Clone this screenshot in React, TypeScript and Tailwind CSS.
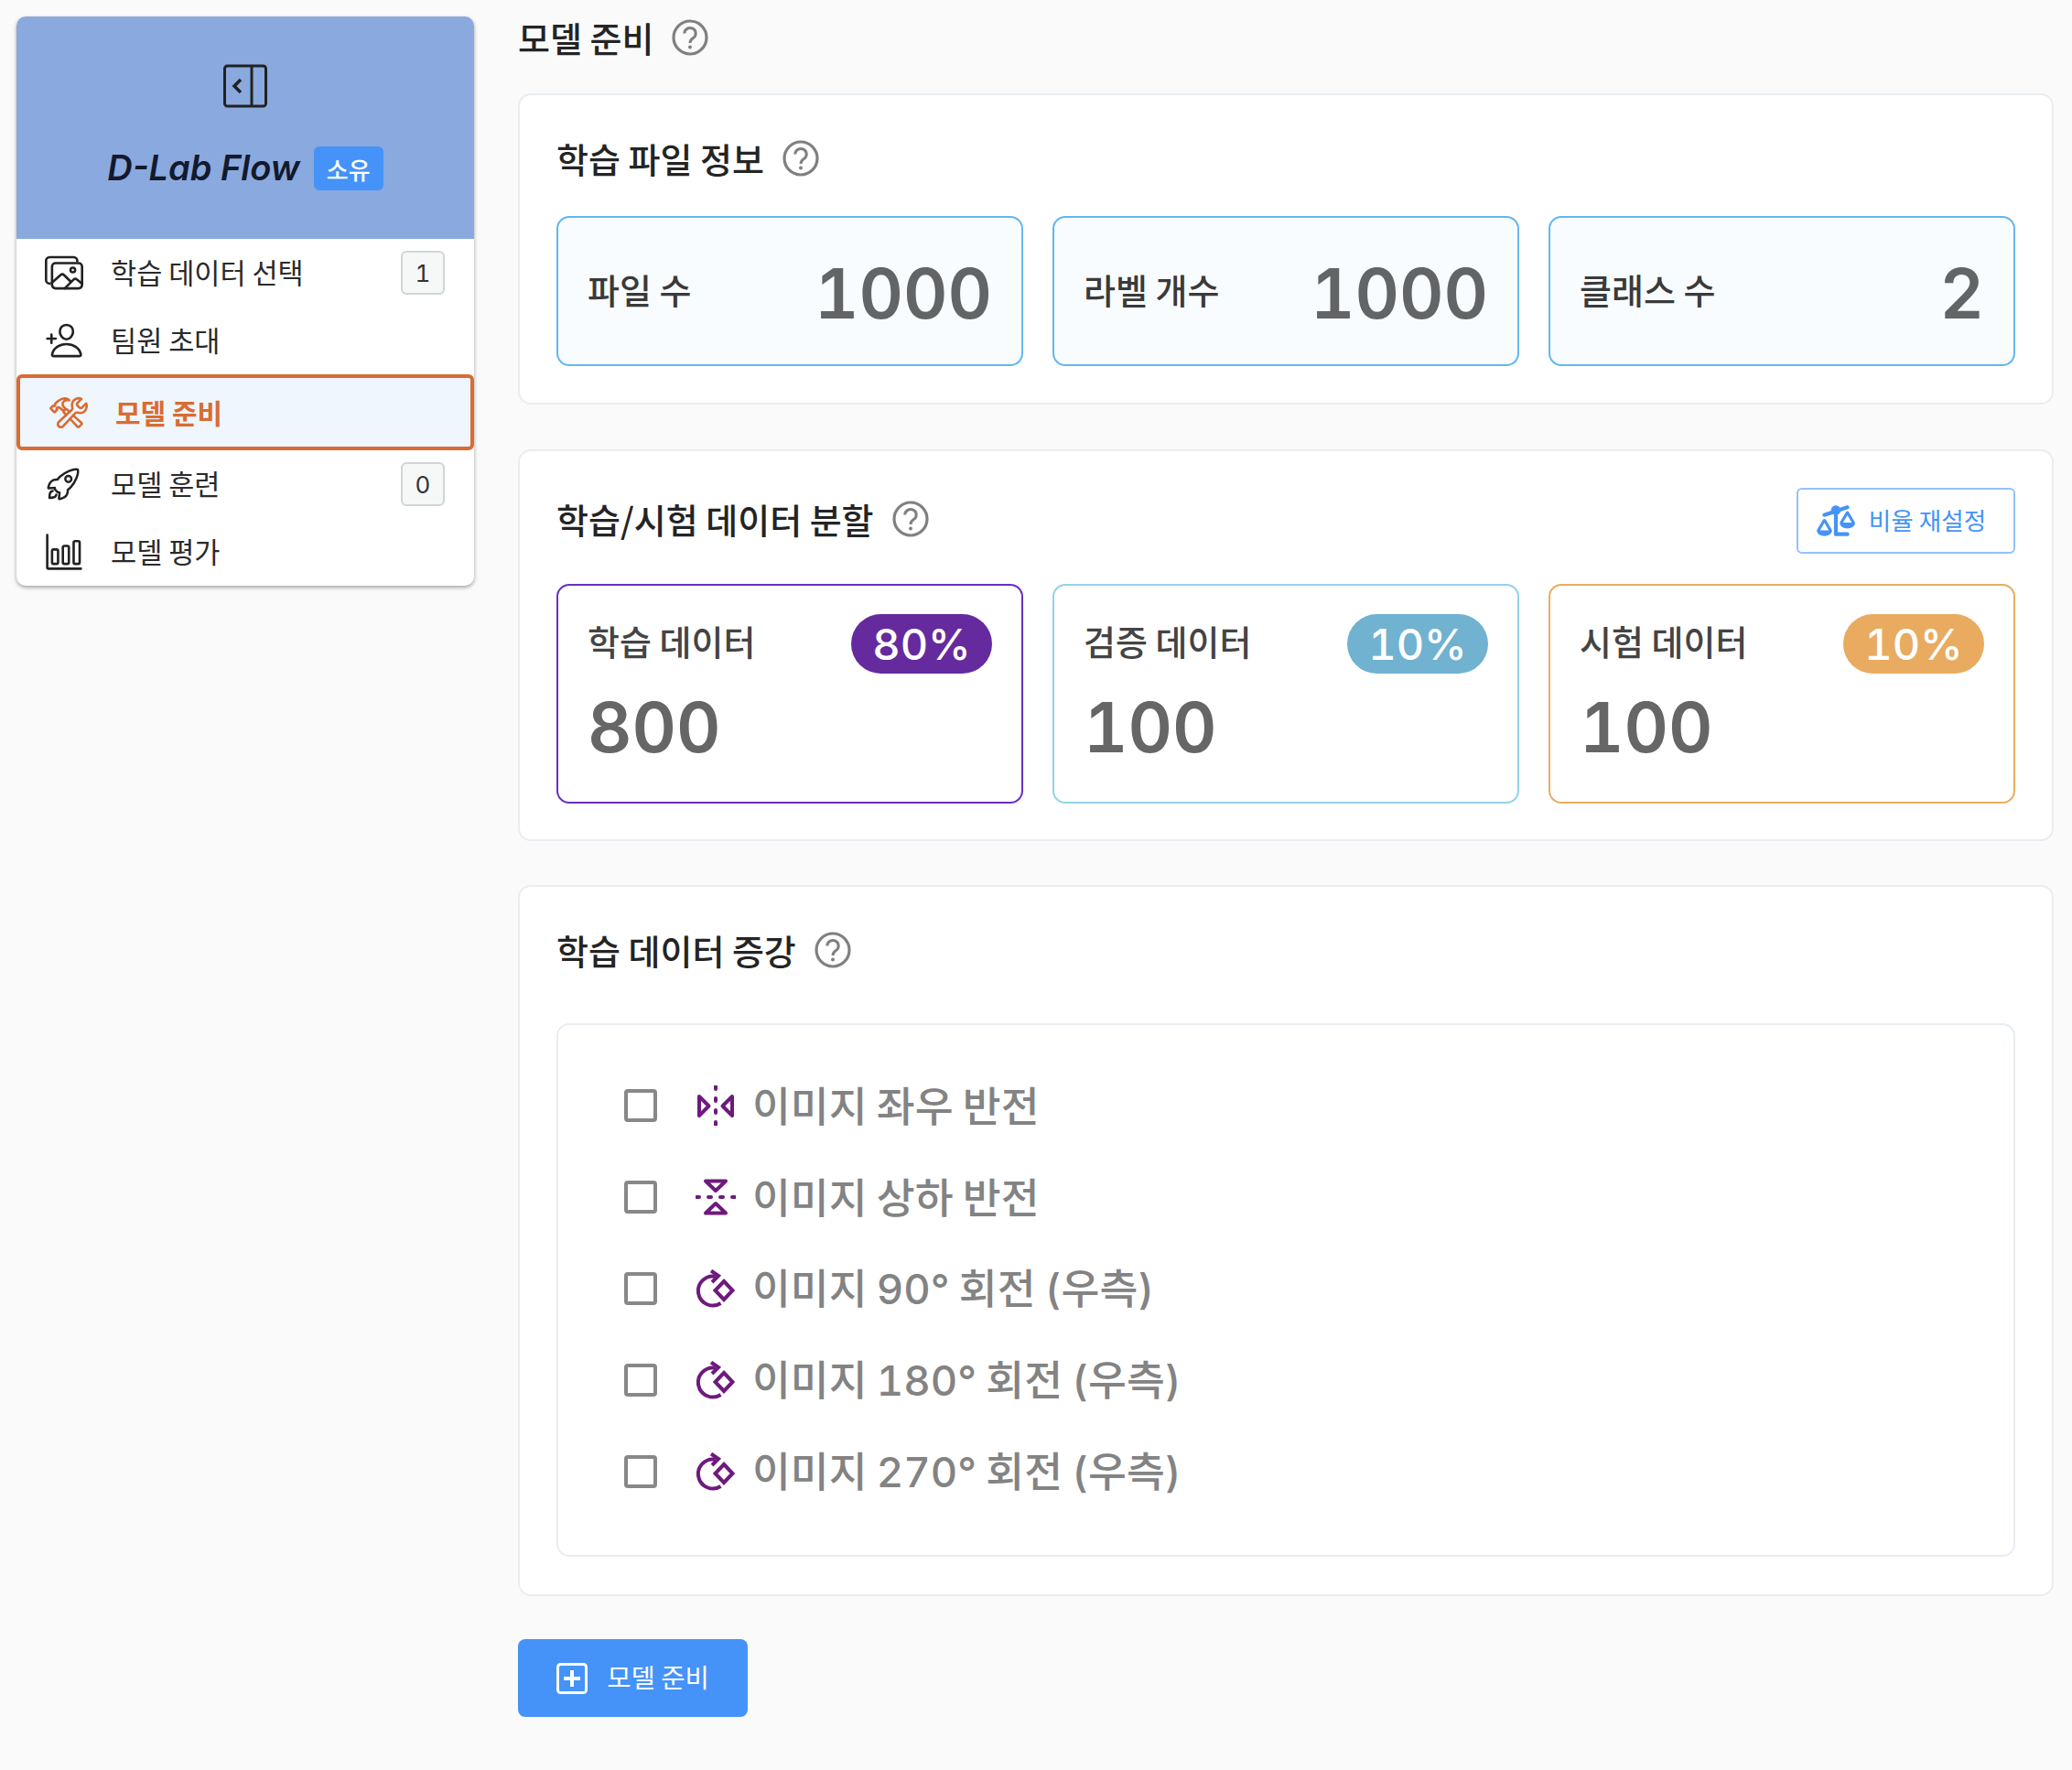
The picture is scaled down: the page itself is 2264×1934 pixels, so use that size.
import React from "react";
import { IoImagesOutline, IoConstructOutline, IoRocketOutline, IoBarChartOutline, IoPersonAddOutline } from "react-icons/io5";
import { FaScaleUnbalanced } from "react-icons/fa6";

const Help = () => (
  <svg width="40" height="40" viewBox="0 0 40 40" fill="none" stroke="#808080" className="shrink-0">
    <circle cx="20" cy="20" r="18" strokeWidth="3.2" />
    <path d="M13.8 15.5 a6.2 6 0 1 1 9.6 5 c-2.4 1.6 -3.4 2.8 -3.4 5.5" strokeWidth="3" />
    <circle cx="20" cy="30.5" r="2" fill="#808080" stroke="none" />
  </svg>
);

const Title = ({ children }: { children: React.ReactNode }) => (
  <div className="flex items-center gap-[20px]">
    <span className="text-[38px] font-medium leading-none text-[#242424]">{children}</span>
    <Help />
  </div>
);

const N = ({ children }: { children: React.ReactNode }) => (
  <span className="font-[Inter] tabular-nums">{children}</span>
);

const Rotate = () => (
  <svg width="42" height="42" viewBox="0 0 42 42" fill="none" stroke="#6e1a7d" strokeWidth="4">
    <path d="M20.5 7.7 A16 16 0 1 0 26.5 37" />
    <path d="M16 1.5 L24 7 L17 14" />
    <path d="M30 13 L39.5 23 L30 33 L20.5 23 Z" />
  </svg>
);

const SymV = () => (
  <svg width="40" height="44" viewBox="0 0 40 44" fill="none" stroke="#6e1a7d" strokeWidth="4" strokeLinejoin="round">
    <path d="M20 1 V43" strokeDasharray="3 10" strokeLinecap="round" />
    <path d="M2 12 L12.5 22.5 L2 33 Z" />
    <path d="M38 12 L27.5 22.5 L38 33 Z" />
  </svg>
);

const SymH = () => (
  <svg width="44" height="40" viewBox="0 0 44 40" fill="none" stroke="#6e1a7d" strokeWidth="4" strokeLinejoin="round">
    <path d="M1 20 H43" strokeDasharray="3 10" strokeLinecap="round" />
    <path d="M11 2.5 L33 2.5 L22 13 Z" />
    <path d="M11 37.5 L33 37.5 L22 27 Z" />
  </svg>
);

const SidebarToggle = () => (
  <svg width="48" height="48" viewBox="0 0 48 48" fill="none" stroke="#222" strokeWidth="3">
    <rect x="1.5" y="2" width="45" height="44" rx="3" />
    <path d="M31 2 V46" />
    <path d="M19 17 L12 24 L19 31" strokeWidth="3.5" />
  </svg>
);

const PlusSquare = () => (
  <svg width="34" height="34" viewBox="0 0 34 34" fill="none" stroke="#fff">
    <rect x="1.5" y="1.5" width="31" height="31" rx="3" strokeWidth="3" />
    <path d="M17 8 V26 M8 17 H26" strokeWidth="4" />
  </svg>
);

const MenuItem = ({ icon, label, badge }: { icon: React.ReactNode; label: string; badge?: string }) => (
  <div className="flex items-center h-[74px] pl-[31px] pr-[32px]">
    <div className="w-[72px] flex items-center justify-start text-[#222]">{icon}</div>
    <span className="text-[30.6px] text-[#2a2a2a] flex-1 leading-none pb-[2px]">{label}</span>
    {badge && (
      <span className="w-[48px] h-[48px] flex items-center justify-center rounded-[6px] border-2 border-[#d0d5d5] bg-[#f6f8f8] text-[26px] text-[#333]"><N>{badge}</N></span>
    )}
  </div>
);

const Stat = ({ label, value }: { label: string; value: string }) => (
  <div className="flex-1 h-[164px] rounded-[14px] border-2 border-[#63b7ee] bg-[#f8fcff] flex items-center justify-between px-8">
    <span className="text-[38px] font-medium text-[#3a3a3a] pb-[6px]">{label}</span>
    <span className="text-[75px] font-semibold text-[#636466] leading-none"><N>{value}</N></span>
  </div>
);

const Split = ({ label, pct, value, border, pill }: { label: string; pct: string; value: string; border: string; pill: string }) => (
  <div className={`flex-1 h-[240px] rounded-[14px] border-2 ${border} bg-white px-8 pt-[31px]`}>
    <div className="flex items-center justify-between h-[65px]">
      <span className="text-[38px] font-medium text-[#444] pb-[9px]">{label}</span>
      <span className={`h-[65px] w-[154px] rounded-[33px] ${pill} text-white text-[47px] font-medium flex items-center justify-center leading-none`}><N>{pct}</N></span>
    </div>
    <div className="text-[75px] font-semibold text-[#666] leading-none mt-[16px]"><N>{value}</N></div>
  </div>
);

const Aug = ({ icon, label }: { icon: React.ReactNode; label: React.ReactNode }) => (
  <div className="flex items-center h-[100px]">
    <span className="w-[36px] h-[36px] rounded-[4px] border-[4px] border-[#888] shrink-0" />
    <span className="w-[44px] ml-[42px] flex items-center justify-center shrink-0">{icon}</span>
    <span className="ml-[18px] text-[45.5px] font-medium text-[#838383] leading-none pb-[2px]">{label}</span>
  </div>
);

export default function App() {
  return (
    <div className="flex min-h-[1934px] bg-[#fafafa] items-start" style={{ fontFamily: '"Noto Sans CJK KR", sans-serif' }}>
      <aside className="w-[500px] ml-[18px] mt-[18px] rounded-[10px] bg-white shadow-[0_2px_4px_rgba(0,0,0,0.35)] overflow-hidden shrink-0">
        <div className="h-[243px] bg-[#8aa9de] flex flex-col items-center pt-[52px]">
          <SidebarToggle />
          <div className="flex items-center gap-[15px] mt-[42px]">
            <span className="text-[38px] font-semibold italic text-[#121a2c] leading-none font-[Inter] pb-[2px]">D-Lab Flow</span>
            <span className="w-[76px] h-[48px] rounded-[6px] bg-[#4593f8] text-white text-[26px] font-medium flex items-center justify-center">소유</span>
          </div>
        </div>
        <MenuItem icon={<IoImagesOutline className="text-[42px]" />} label="학습 데이터 선택" badge="1" />
        <MenuItem icon={<IoPersonAddOutline className="text-[42px]" />} label="팀원 초대" />
        <div className="h-[83px] flex items-center rounded-[6px] border-[4px] border-[#d96c32] bg-[#eff6fe] pl-[32px] text-[#d96c32]">
          <div className="w-[72px] flex items-center"><IoConstructOutline className="text-[42px]" /></div>
          <span className="text-[30px] font-bold leading-none pb-[2px]">모델 준비</span>
        </div>
        <MenuItem icon={<IoRocketOutline className="text-[40px]" />} label="모델 훈련" badge="0" />
        <MenuItem icon={<IoBarChartOutline className="text-[42px]" />} label="모델 평가" />
      </aside>

      <main className="w-[1678px] ml-[48px] shrink-0">
        <div className="h-[81px] flex items-center">
          <Title>모델 준비</Title>
        </div>
        <section className="h-[340px] rounded-[14px] border-2 border-[#e9edf2] bg-white px-[40px] mt-[21px] pt-[49px]">
          <Title>학습 파일 정보</Title>
          <div className="flex gap-[32px] mt-[43px]">
            <Stat label="파일 수" value="1000" />
            <Stat label="라벨 개수" value="1000" />
            <Stat label="클래스 수" value="2" />
          </div>
        </section>
        <section className="h-[428px] rounded-[14px] border-2 border-[#e9edf2] bg-white px-[40px] mt-[49px] pt-[40px]">
          <div className="flex items-center justify-between h-[72px]">
            <div className="pb-[5px]"><Title>학습/시험 데이터 분할</Title></div>
            <button className="w-[239px] h-[72px] rounded-[6px] border-2 border-[#93c1fb] bg-white text-[#4593f8] flex items-center justify-center gap-[15px] pr-[10px]">
              <FaScaleUnbalanced className="text-[42px]" />
              <span className="text-[26.6px] leading-none pb-[2px]">비율 재설정</span>
            </button>
          </div>
          <div className="flex gap-[32px] mt-[33px]">
            <Split label="학습 데이터" pct="80%" value="800" border="border-[#6a2ec0]" pill="bg-[#652a9e]" />
            <Split label="검증 데이터" pct="10%" value="100" border="border-[#93d2e8]" pill="bg-[#70b2d0]" />
            <Split label="시험 데이터" pct="10%" value="100" border="border-[#e8ad60]" pill="bg-[#e8ab5f]" />
          </div>
        </section>
        <section className="h-[777px] rounded-[14px] border-2 border-[#e9edf2] bg-white px-[40px] mt-[48px] pt-[49px]">
          <Title>학습 데이터 증강</Title>
          <div className="h-[583px] mt-[60px] rounded-[14px] border-2 border-[#e9edf2] pl-[72px] pt-[38px]">
            <Aug icon={<SymV />} label="이미지 좌우 반전" />
            <Aug icon={<SymH />} label="이미지 상하 반전" />
            <Aug icon={<Rotate />} label={<>이미지 <N>90°</N> 회전 <N>(</N>우측<N>)</N></>} />
            <Aug icon={<Rotate />} label={<>이미지 <N>180°</N> 회전 <N>(</N>우측<N>)</N></>} />
            <Aug icon={<Rotate />} label={<>이미지 <N>270°</N> 회전 <N>(</N>우측<N>)</N></>} />
          </div>
        </section>
        <button className="mt-[47px] w-[251px] h-[85px] rounded-[8px] bg-[#4593f8] text-white flex items-center justify-center gap-[21px]">
          <PlusSquare />
          <span className="text-[28.6px] leading-none pb-[2px]">모델 준비</span>
        </button>
      </main>
    </div>
  );
}
